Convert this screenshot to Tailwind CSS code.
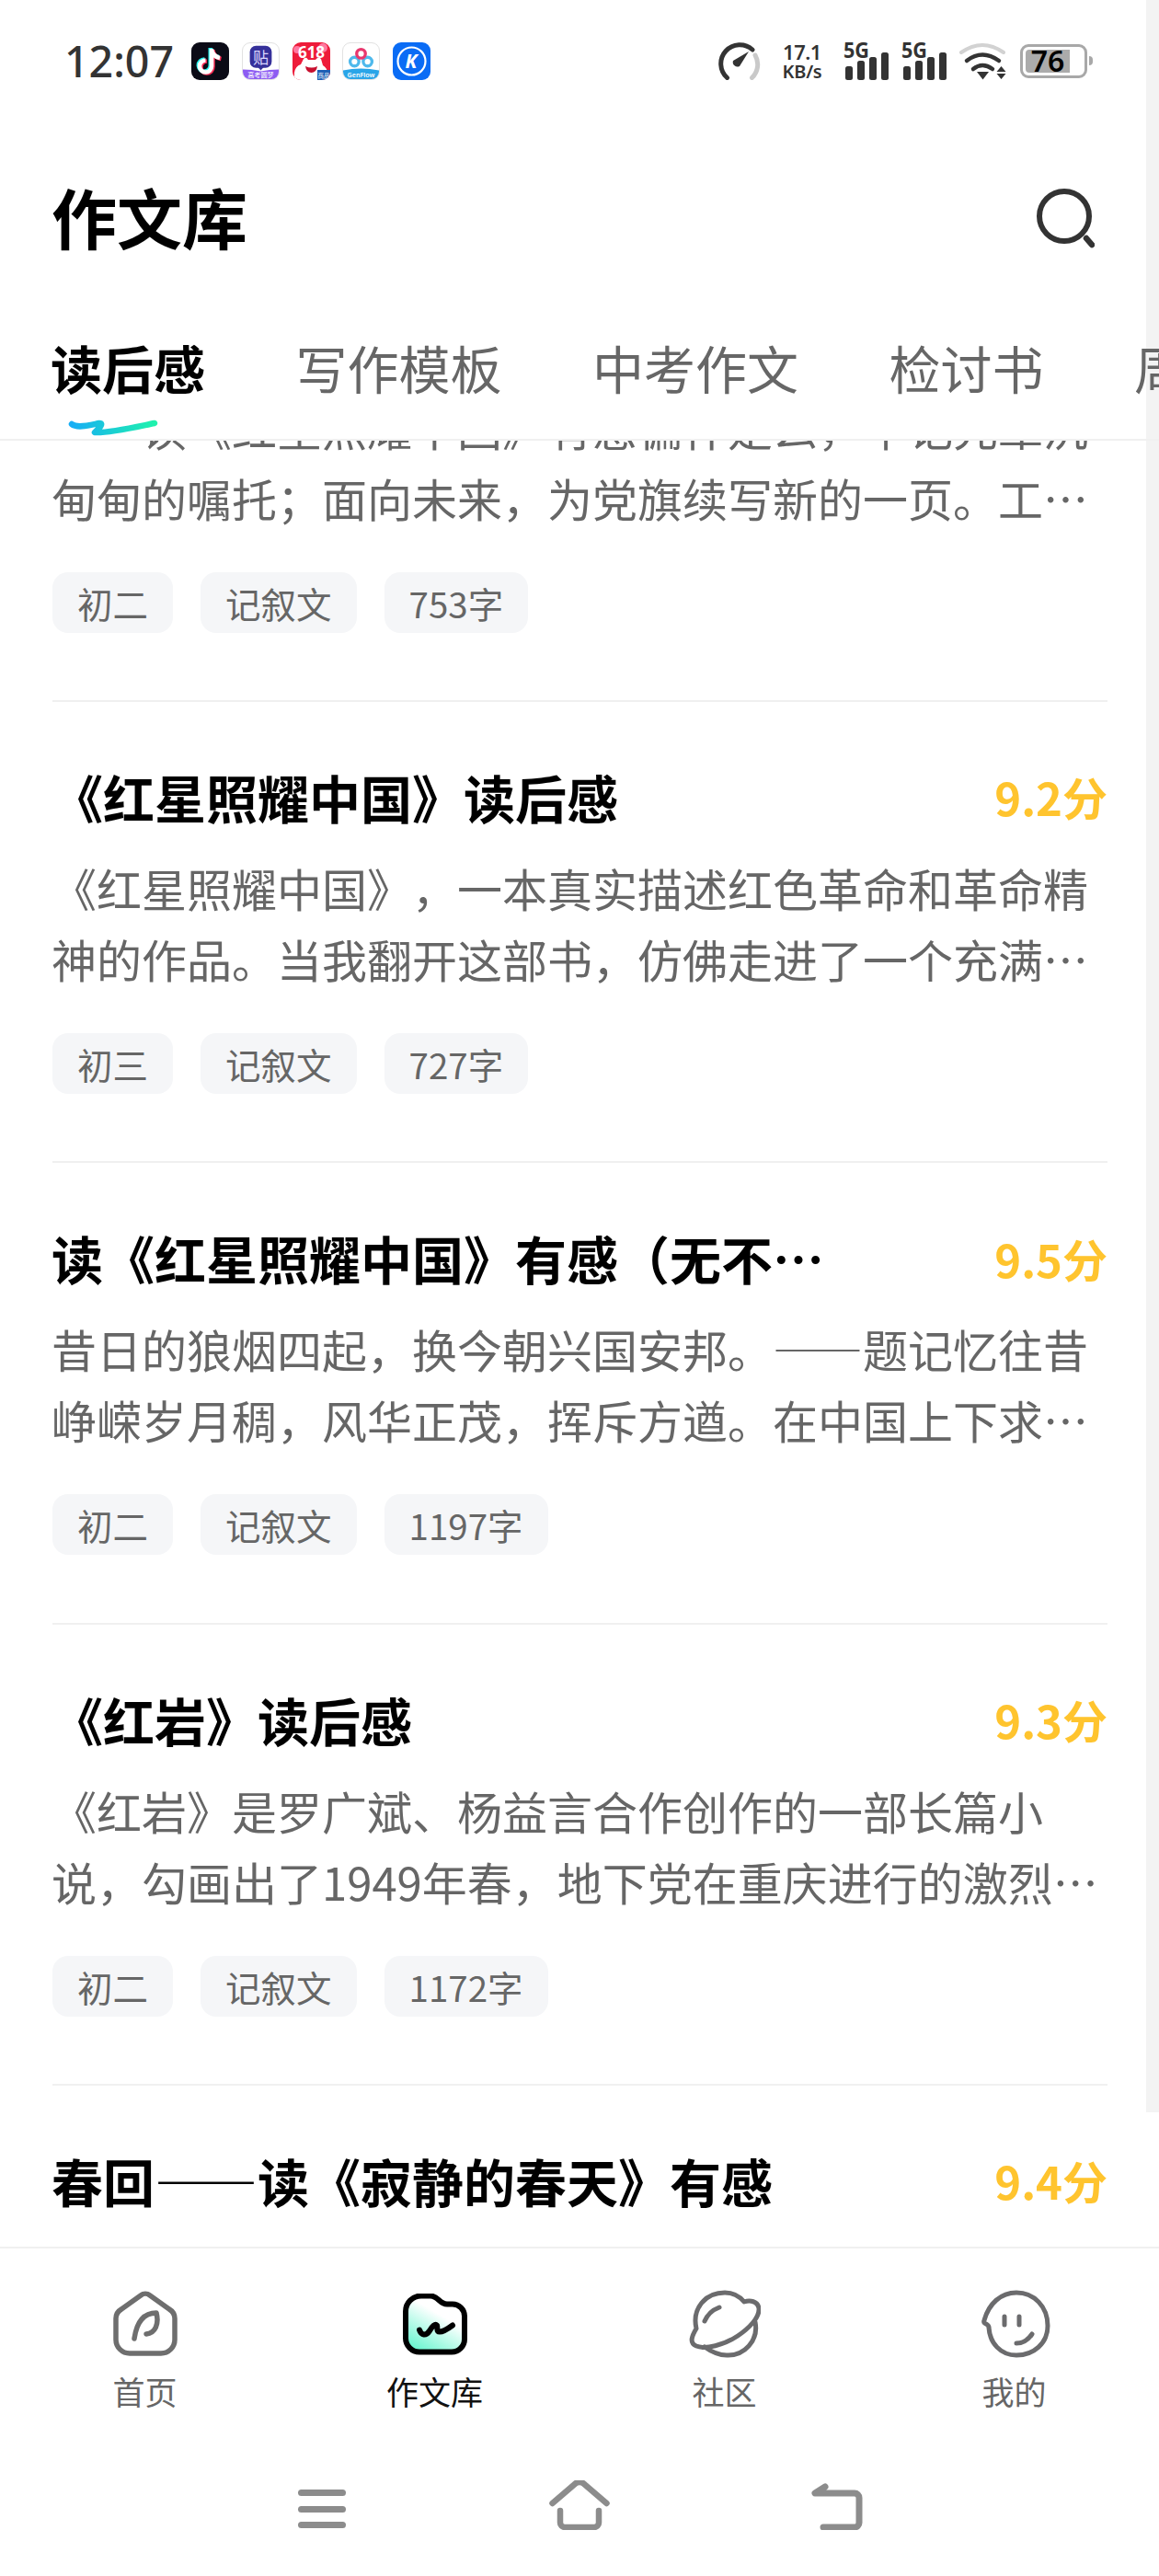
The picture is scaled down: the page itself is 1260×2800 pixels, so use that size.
<!DOCTYPE html>
<html lang="zh-CN">
<head>
<meta charset="utf-8">
<script src="https://cdn.jsdelivr.net/npm/@tailwindcss/browser@4"></script>
</head>
<body class="m-0 bg-white">
<div class="relative w-[1260px] h-[2800px] overflow-hidden bg-white flex flex-col [text-spacing-trim:space-all] font-['Noto_Sans_CJK_SC',sans-serif]">
  <div class="absolute right-0 top-0 w-[14px] h-[2296px] bg-[#f3f3f3]"></div>

  <header class="relative shrink-0 h-[479px] border-b-2 border-[#f0f0f0]">
    <!-- status bar -->
    <div class="h-[132px] flex items-center pl-[70px] pr-[72px]">
      <span class="w-[117px] text-[46.5px] leading-none font-medium text-[#333] font-['Noto_Sans',sans-serif]">12:07</span>
      <div class="ml-[21px] flex gap-[13.75px]">
        <div class="w-[41px] h-[41px] rounded-[9px] overflow-hidden bg-[#0b0b16]">
          <svg viewBox="0 0 41 41" class="w-full h-full" fill="none" stroke-width="4.6">
            <path d="M22 7v19a6.5 6.5 0 1 1-6.5-6.5M22 8c1 5 4 8 9 9" stroke="#25f4ee" transform="translate(-1.2 -1)"/>
            <path d="M22 7v19a6.5 6.5 0 1 1-6.5-6.5M22 8c1 5 4 8 9 9" stroke="#fe2c55" transform="translate(1.4 1)"/>
            <path d="M22 7v19a6.5 6.5 0 1 1-6.5-6.5M22 8c1 5 4 8 9 9" stroke="#fff"/>
          </svg>
        </div>
        <div class="w-[41px] h-[41px] rounded-[9px] overflow-hidden bg-white border border-[#e2e2e2]">
          <svg viewBox="0 0 41 41" class="w-full h-full">
            <rect x="8" y="3" width="25" height="25" rx="7" fill="#35309a"/>
            <path d="M17 27h7l-3.500 4z" fill="#35309a"/>
            <text x="20.500" y="23" text-anchor="middle" font-size="18" fill="#dcd8ff" font-family="Noto Sans CJK SC">贴</text>
            <path d="M0 30q10 0 20.500 2 10-2 20.500-2v11h-41z" fill="#8d5cf2"/>
            <text x="20.500" y="39" text-anchor="middle" font-size="7.500" fill="#fff" font-family="Noto Sans CJK SC">高考圆梦</text>
          </svg>
        </div>
        <div class="w-[41px] h-[41px] rounded-[9px] overflow-hidden bg-[#ee1c3a]">
          <svg viewBox="0 0 41 41" class="w-full h-full">
            <circle cx="33" cy="6" r="5" fill="#ff78a0"/>
            <circle cx="5" cy="8" r="4" fill="#ff78a0"/>
            <text x="20.500" y="17" text-anchor="middle" font-size="17" font-weight="700" fill="#fff" font-family="Noto Sans">618</text>
            <path d="M2 41v-8q1-7 7-9l3-6q3-3 5 1h8q3-4 6-1l2 7q5 3 5 9v7z" fill="#fff"/>
            <path d="M14 26q7 3 13 0-1 7-6.500 7T14 26z" fill="#c8102e"/>
            <rect x="27" y="30" width="14" height="11" fill="#1f5fb5"/>
            <text x="34" y="38.500" text-anchor="middle" font-size="6.500" fill="#fff" font-family="Noto Sans CJK SC">商品</text>
          </svg>
        </div>
        <div class="w-[41px] h-[41px] rounded-[9px] overflow-hidden bg-white border border-[#e2e2e2]">
          <svg viewBox="0 0 41 41" class="w-full h-full" fill="none">
            <circle cx="13" cy="21" r="5" stroke="#4fb9ec" stroke-width="3.500"/>
            <circle cx="28" cy="21" r="5" stroke="#4fb9ec" stroke-width="3.500"/>
            <circle cx="20.500" cy="12" r="5" stroke="#e8386e" stroke-width="3.500"/>
            <path d="M0 31q20-4 41 0v10h-41z" fill="#2aa5e8"/>
            <text x="20.500" y="38.500" text-anchor="middle" font-size="7.500" font-weight="600" fill="#fff" font-family="Noto Sans">GenFlow</text>
          </svg>
        </div>
        <div class="w-[41px] h-[41px] rounded-[9px] overflow-hidden bg-[#0a6cf5]">
          <svg viewBox="0 0 41 41" class="w-full h-full" fill="none">
            <circle cx="20.500" cy="20.500" r="15" stroke="#fff" stroke-width="2.200"/>
            <text x="20" y="28" text-anchor="middle" font-size="21" font-weight="700" font-style="italic" fill="#fff" font-family="Noto Sans">K</text>
          </svg>
        </div>
      </div>

      <div class="ml-auto flex items-center">
        <svg viewBox="0 0 46 41" class="w-[46px] h-[41px]" fill="none" stroke-linecap="round">
          <path d="M9.500 38.500A20 20 0 0 1 37 8" stroke="#333" stroke-width="5"/>
          <path d="M40 14a20 20 0 0 1-3.500 24.500" stroke="#c9c9c9" stroke-width="5"/>
          <path d="M33 10L23 26a5 5 0 0 1-7-6z" fill="#333"/>
        </svg>
        <div class="ml-[20px] w-[50px] flex flex-col items-center text-[#333] font-semibold font-['Noto_Sans',sans-serif]">
          <span class="text-[22px] leading-[23px] tracking-[-0.5px]">17.1</span>
          <span class="text-[20px] leading-[20px] tracking-[-0.3px]">KB/s</span>
        </div>
        <svg viewBox="0 0 50 41" class="ml-[20px] w-[50px] h-[41px]" fill="#333">
          <text x="0" y="17" font-size="23" font-weight="700" textLength="28" lengthAdjust="spacingAndGlyphs" font-family="Noto Sans">5G</text>
          <rect x="2" y="26" width="8" height="15" rx="2.500"/><rect x="15" y="20" width="8" height="21" rx="2.500"/><rect x="28" y="16" width="8" height="25" rx="2.500"/><rect x="41" y="11" width="8" height="30" rx="2.500"/>
        </svg>
        <svg viewBox="0 0 50 41" class="ml-[13px] w-[50px] h-[41px]" fill="#333">
          <text x="0" y="17" font-size="23" font-weight="700" textLength="28" lengthAdjust="spacingAndGlyphs" font-family="Noto Sans">5G</text>
          <rect x="2" y="26" width="8" height="15" rx="2.500"/><rect x="15" y="20" width="8" height="21" rx="2.500"/><rect x="28" y="16" width="8" height="25" rx="2.500"/><rect x="41" y="11" width="8" height="30" rx="2.500"/>
        </svg>
        <svg viewBox="0 0 51 41" class="ml-[13px] w-[51px] h-[41px]" fill="none">
          <path d="M2 11Q25-5 48 11" stroke="#d2d2d2" stroke-width="4" stroke-linecap="round"/>
          <path d="M8 20Q25 7 43 20" stroke="#333" stroke-width="4.500" stroke-linecap="round"/>
          <path d="M15 29Q25 21 36 29" stroke="#333" stroke-width="4.500" stroke-linecap="round"/>
          <path d="M19 32h13l-6.500 8.500z" fill="#333"/>
          <path d="M45.500 26l5 6h-10zM40.500 34h10l-5 6z" fill="#333"/>
        </svg>
        <div class="ml-[15px] flex items-center">
          <div class="w-[73px] h-[37px] rounded-[9px] border-[3px] border-[#a8a8a8] p-[3px] flex">
            <div class="relative w-[48px] h-full bg-[#ababab] rounded-l-[4px] flex items-center justify-center">
              <span class="text-[32px] leading-none font-semibold text-black font-['Noto_Sans',sans-serif]">76</span>
            </div>
          </div>
          <div class="ml-[2px] w-[4px] h-[10px] rounded-r-full bg-[#a8a8a8]"></div>
        </div>
      </div>
    </div>

    <!-- title -->
    <div class="mt-[62px] h-[80px] flex items-center justify-between pl-[56px] pr-[70px]">
      <h1 class="text-[71px] leading-[80px] font-bold text-black">作文库</h1>
      <svg viewBox="0 0 64 66" class="w-[64px] h-[66px] relative top-[3px]" fill="none" stroke="#333" stroke-linecap="round">
        <circle cx="31" cy="31" r="27" stroke-width="6"/>
        <path d="M55 55l6 7" stroke-width="6.500"/>
      </svg>
    </div>

    <!-- tabs -->
    <nav class="mt-[85px] h-[80px] pl-[55px] flex gap-[98.5px] whitespace-nowrap text-[56px] leading-[80px] text-[#666]">
      <div class="relative shrink-0 font-bold text-black">读后感
        <svg viewBox="0 0 100 20" class="absolute left-[19px] top-[96px] w-[100px] h-[20px]" fill="none">
          <defs><linearGradient id="ind" x1="0" x2="1"><stop offset="0" stop-color="#17aef5"/><stop offset="1" stop-color="#1ff2ad"/></linearGradient></defs>
          <path d="M4 6C10 11 24 7 34 5C40 5 32 12 29 15C44 16 74 9 94 5" stroke="url(#ind)" stroke-width="6.500" stroke-linecap="round" stroke-linejoin="round"/>
        </svg>
      </div>
      <div class="shrink-0">写作模板</div>
      <div class="shrink-0">中考作文</div>
      <div class="shrink-0">检讨书</div>
      <div class="shrink-0">周记</div>
    </nav>
  </header>

  <!-- list -->
  <main class="relative flex-1 min-h-0 overflow-hidden pl-[57px] pr-[56px]">
    <div class="-mt-[54px] pb-[73px]">
      <p class="-ml-[1px] text-[49px] leading-[77px] text-[#666] whitespace-nowrap">　　读《红星照耀中国》有感偏什是么，牢记先辈沉<br>甸甸的嘱托；面向未来，为党旗续写新的一页。工…</p>
      <div class="mt-[43px] flex gap-[30px] text-[38.5px] leading-[66px] text-[#666]">
        <span class="h-[66px] px-[27px] rounded-[17px] bg-[#f5f6f8]">初二</span>
        <span class="h-[66px] px-[27px] rounded-[17px] bg-[#f5f6f8]">记叙文</span>
        <span class="h-[66px] px-[27px] rounded-[17px] bg-[#f5f6f8]">753字</span>
      </div>
    </div>

    <article class="border-t-2 border-[#f0f0f0] pt-[63px] pb-[73.33px]">
      <div class="h-[80px] flex items-center justify-between">
        <h2 class="-ml-[1px] text-[56px] leading-[80px] font-bold text-black whitespace-nowrap">《红星照耀中国》读后感</h2>
        <span class="text-[49px] font-bold text-[#ffc42e]">9.2分</span>
      </div>
      <p class="-ml-[1px] mt-[20px] text-[49px] leading-[77px] text-[#666] whitespace-nowrap">《红星照耀中国》，一本真实描述红色革命和革命精<br>神的作品。当我翻开这部书，仿佛走进了一个充满…</p>
      <div class="mt-[43px] flex gap-[30px] text-[38.5px] leading-[66px] text-[#666]">
        <span class="h-[66px] px-[27px] rounded-[17px] bg-[#f5f6f8]">初三</span>
        <span class="h-[66px] px-[27px] rounded-[17px] bg-[#f5f6f8]">记叙文</span>
        <span class="h-[66px] px-[27px] rounded-[17px] bg-[#f5f6f8]">727字</span>
      </div>
    </article>

    <article class="border-t-2 border-[#f0f0f0] pt-[63px] pb-[73.33px]">
      <div class="h-[80px] flex items-center justify-between">
        <h2 class="-ml-[1px] text-[56px] leading-[80px] font-bold text-black whitespace-nowrap">读《红星照耀中国》有感（无不…</h2>
        <span class="text-[49px] font-bold text-[#ffc42e]">9.5分</span>
      </div>
      <p class="-ml-[1px] mt-[20px] text-[49px] leading-[77px] text-[#666] whitespace-nowrap">昔日的狼烟四起，换今朝兴国安邦。——题记忆往昔<br>峥嵘岁月稠，风华正茂，挥斥方遒。在中国上下求…</p>
      <div class="mt-[43px] flex gap-[30px] text-[38.5px] leading-[66px] text-[#666]">
        <span class="h-[66px] px-[27px] rounded-[17px] bg-[#f5f6f8]">初二</span>
        <span class="h-[66px] px-[27px] rounded-[17px] bg-[#f5f6f8]">记叙文</span>
        <span class="h-[66px] px-[27px] rounded-[17px] bg-[#f5f6f8]">1197字</span>
      </div>
    </article>

    <article class="border-t-2 border-[#f0f0f0] pt-[63px] pb-[73.33px]">
      <div class="h-[80px] flex items-center justify-between">
        <h2 class="-ml-[1px] text-[56px] leading-[80px] font-bold text-black whitespace-nowrap">《红岩》读后感</h2>
        <span class="text-[49px] font-bold text-[#ffc42e]">9.3分</span>
      </div>
      <p class="-ml-[1px] mt-[20px] text-[49px] leading-[77px] text-[#666] whitespace-nowrap">《红岩》是罗广斌、杨益言合作创作的一部长篇小<br>说，勾画出了1949年春，地下党在重庆进行的激烈…</p>
      <div class="mt-[43px] flex gap-[30px] text-[38.5px] leading-[66px] text-[#666]">
        <span class="h-[66px] px-[27px] rounded-[17px] bg-[#f5f6f8]">初二</span>
        <span class="h-[66px] px-[27px] rounded-[17px] bg-[#f5f6f8]">记叙文</span>
        <span class="h-[66px] px-[27px] rounded-[17px] bg-[#f5f6f8]">1172字</span>
      </div>
    </article>

    <article class="border-t-2 border-[#f0f0f0] pt-[63px]">
      <div class="h-[80px] flex items-center justify-between">
        <h2 class="-ml-[1px] text-[56px] leading-[80px] font-bold text-black whitespace-nowrap">春回——读《寂静的春天》有感</h2>
        <span class="text-[49px] font-bold text-[#ffc42e]">9.4分</span>
      </div>
    </article>
  </main>

  <!-- bottom tabs -->
  <footer class="relative shrink-0 bg-white border-t-2 border-[#f0f0f0]">
    <div class="grid grid-cols-4 pt-[44px] text-[35px] leading-[44px] text-[#666] text-center">
      <div class="flex flex-col items-center">
        <svg viewBox="0 0 70 72" class="w-[70px] h-[76px] py-[2px]" fill="none" stroke="#6e6e6e" stroke-linecap="round" stroke-linejoin="round">
          <path d="M30 5a8 8 0 0 1 10 0L61 20a12 12 0 0 1 6 10V53a15 15 0 0 1-15 15H18A15 15 0 0 1 3 53V30a12 12 0 0 1 6-10Z" stroke-width="5.500"/>
          <path d="M23 52C25 38 31 24 47 24C50 36 46 46 36 47" stroke-width="5.500"/>
        </svg>
        <span class="mt-[12.5px]">首页</span>
      </div>
      <div class="flex flex-col items-center text-[#111]">
        <svg viewBox="0 0 70 67" class="w-[70px] h-[76px] py-[4.500px]" fill="none" stroke="#000" stroke-linecap="round" stroke-linejoin="round">
          <defs><linearGradient id="fold" x1="0.700" y1="0.100" x2="0.150" y2="1"><stop offset="0.250" stop-color="#fff"/><stop offset="1" stop-color="#5ff5cc"/></linearGradient></defs>
          <path d="M3 20A17 17 0 0 1 20 3H30C38 3 40 12 48 12H54A13 13 0 0 1 67 25V50A14 14 0 0 1 53 64H18A15 15 0 0 1 3 49Z" stroke-width="6" fill="url(#fold)"/>
          <path d="M18 40C20 46 25 47 29 41C32 36 35 33 37 35C38 38 36 42 40 42C44 42 50 38 54 35" stroke-width="6"/>
        </svg>
        <span class="mt-[12.5px]">作文库</span>
      </div>
      <div class="flex flex-col items-center">
        <svg viewBox="0 0 78 74" class="w-[78px] h-[76px] py-[1px]" fill="none" stroke="#6b6b6d" stroke-linecap="round" stroke-linejoin="round" stroke-width="5">
          <path d="M8 42C3 20 18 3 39 3C48 3 55 7 60 13C66 11 75 12 76 20C77 30 65 42 53 50C38 60 18 65 8 61C1 58 2 52 8 42Z"/>
          <path d="M72 35C76 55 60 72 41 71C31 71 24 67 17 62"/>
          <path d="M17 34C20 27 25 22 33 19"/>
        </svg>
        <span class="mt-[12.5px]">社区</span>
      </div>
      <div class="flex flex-col items-center">
        <svg viewBox="0 0 78 74" class="w-[78px] h-[76px] py-[1px]" fill="none" stroke="#6b6b6d" stroke-linecap="round" stroke-linejoin="round" stroke-width="5">
          <path d="M6 33C11 15 24 3 41 3C60 3 75 18 75 39C75 58 60 71 41 71C24 71 12 58 11 41C11 36 4 38 6 33Z"/>
          <path d="M28 29V38M44 29V38" />
          <path d="M41 58C48 58 54 54 58 48"/>
        </svg>
        <span class="mt-[12.5px]">我的</span>
      </div>
    </div>
    <!-- system navigation -->
    <div class="mt-[75.5px] h-[104px] flex justify-center items-start">
      <div class="w-[280px] h-[54px] flex justify-center items-end pb-[2px]">
        <div class="w-[52px] flex flex-col gap-[10.500px]">
          <div class="h-[7px] rounded-full bg-[#8c8c8c]"></div>
          <div class="h-[7px] rounded-full bg-[#8c8c8c]"></div>
          <div class="h-[7px] rounded-full bg-[#8c8c8c]"></div>
        </div>
      </div>
      <div class="w-[280px] flex justify-center">
        <svg viewBox="0 0 66 54" class="w-[66px] h-[54px]" fill="none" stroke="#8c8c8c" stroke-linecap="round" stroke-linejoin="round" stroke-width="6.500">
          <path d="M3.500 25L28 4a7 7 0 0 1 10 0L62.500 25"/>
          <path d="M12 33V46a5 5 0 0 0 5 5H49a5 5 0 0 0 5-5V33"/>
        </svg>
      </div>
      <div class="w-[280px] flex justify-center">
        <svg viewBox="0 0 56 54" class="w-[56px] h-[54px]" fill="none" stroke="#8c8c8c" stroke-linecap="round" stroke-linejoin="round" stroke-width="7">
          <path d="M15 7L4 14H47a5 5 0 0 1 5 5V46a5 5 0 0 1-5 5H13"/>
        </svg>
      </div>
    </div>
  </footer>
</div>
</body>
</html>
